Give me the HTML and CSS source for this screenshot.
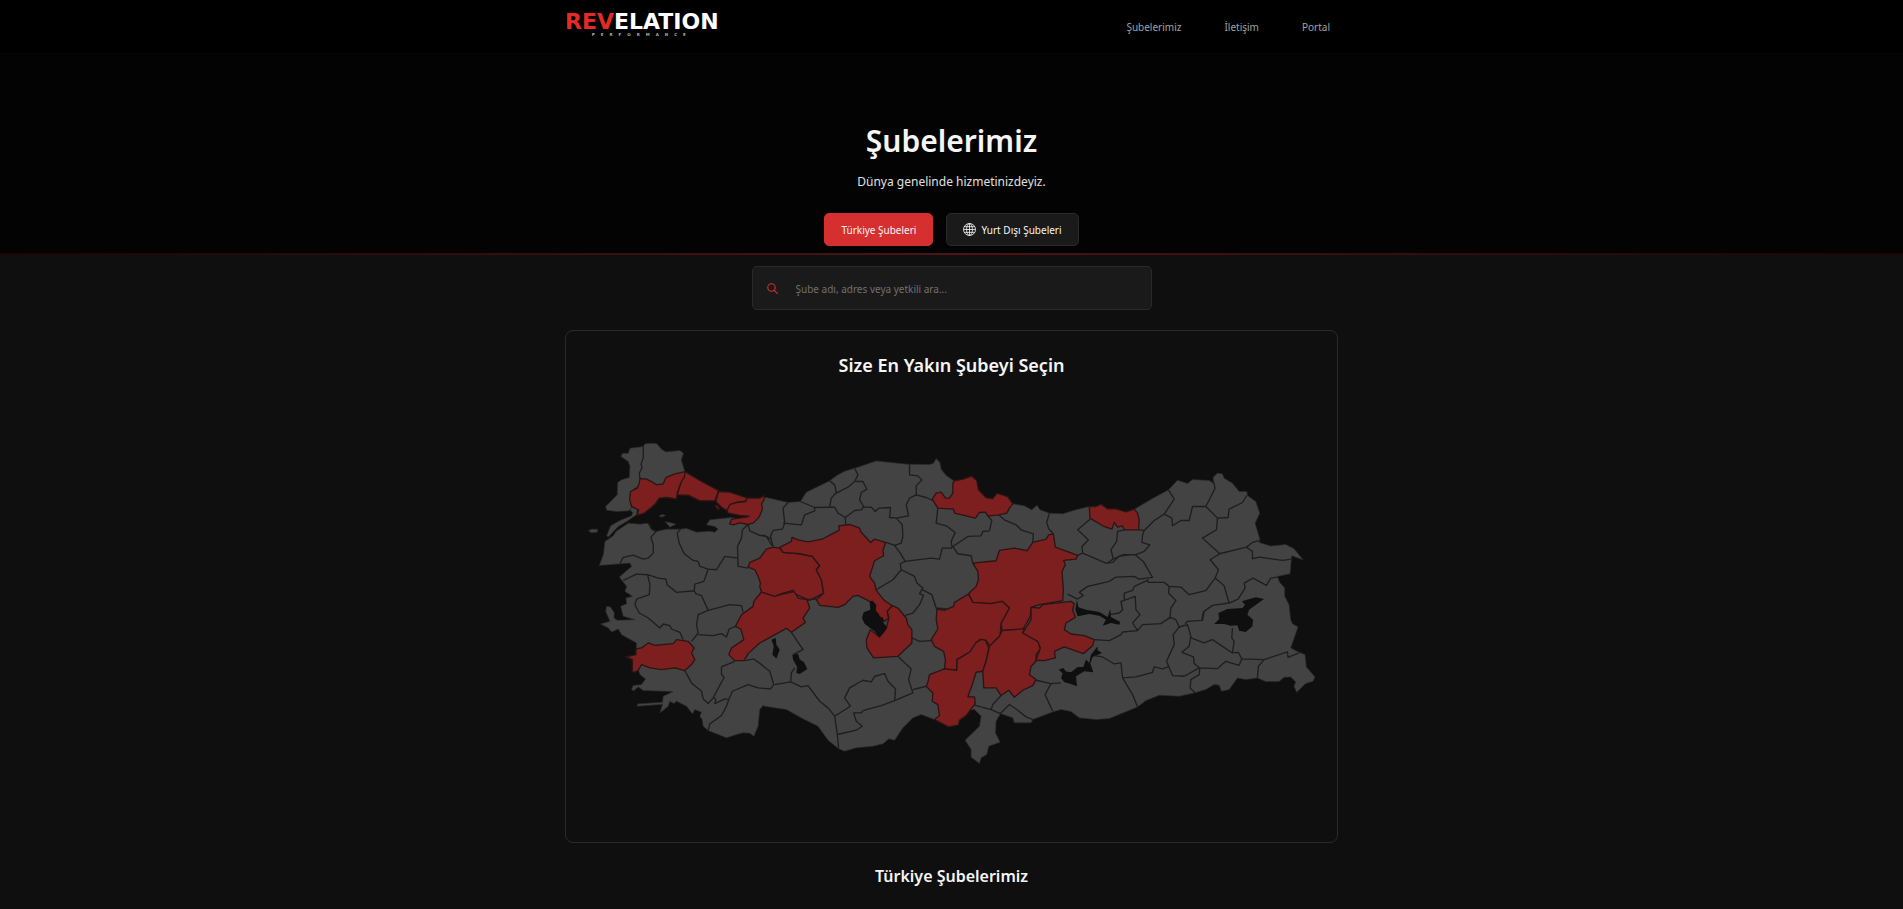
FILE: index.html
```html
<!DOCTYPE html>
<html lang="tr">
<head>
<meta charset="utf-8">
<meta name="viewport" content="width=device-width, initial-scale=1">
<title>Şubelerimiz</title>
<link rel="stylesheet" href="styles.css">
</head>
<body>
<header class="site-header">
  <div class="container header-row">
    <a class="logo" href="#"><span class="logo-name"><span class="logo-accent">REV</span>ELATION</span><span class="logo-sub">PERFORMANCE</span></a>
    <nav class="nav">
      <a href="#">Şubelerimiz</a>
      <a href="#">İletişim</a>
      <a href="#">Portal</a>
    </nav>
  </div>
</header>
<section class="hero">
  <h1>Şubelerimiz</h1>
  <p>Dünya genelinde hizmetinizdeyiz.</p>
  <div class="tabs">
    <button class="tab tab-active" type="button">Türkiye Şubeleri</button>
    <button class="tab" type="button">
      <svg class="globe" viewBox="0 0 16 16" aria-hidden="true"><g fill="none" stroke="currentColor"><circle cx="8" cy="8" r="7.4"/><ellipse cx="8" cy="8" rx="3.6" ry="7.4"/><path d="M8 .6v14.8M.6 8h14.8M1.6 4.5h12.8M1.6 11.5h12.8"/></g></svg>
      Yurt Dışı Şubeleri
    </button>
  </div>
</section>
<main class="container">
  <form class="search">
    <svg class="search-icon" viewBox="0 0 16 16" aria-hidden="true"><g fill="none" stroke="currentColor" stroke-width="1.6" stroke-linecap="round"><circle cx="6.5" cy="6.5" r="5.4"/><path d="M10.6 10.6L15 15"/></g></svg>
    <input type="search" aria-label="Şube ara" placeholder="Şube adı, adres veya yetkili ara...">
  </form>
  <section class="map-card">
    <h2>Size En Yakın Şubeyi Seçin</h2>
    <svg class="map" viewBox="6 -141 2220 1332" role="img" aria-label="Türkiye haritası">
      <g class="land">
        <path d="M128 70L145 70L150 55L190 50L195 42L210 40L230 41L245 58L258 66L300 62L311 70L304 90L315 125L285 150L230 170L180 165L152 185L150 210L155 232L148 243L110 245L80 241L77 230L95 212L112 195L113 158L125 150L148 143L150 110L145 95L123 80Z"/>
        <path d="M155 232L172 238L170 255L140 275L115 290L85 322L80 318L92 288L120 272L155 258L158 248L150 240Z"/>
        <path d="M25 303L35 298L53 298L52 307L35 309ZM237 258l12-4 8 3-12 5zM256 276l15 2 17 5-18 9z"/>
        <path d="M553 204L560 203L625 218L662 215L680 187L750 153L770 138L795 124L825 115L855 105L890 93L925 97L985 103L1050 104L1062 100L1070 86L1081 98L1085 118L1100 137L1123 153L1150 230L1300 222L1335 228L1357 240L1373 226L1382 240L1410 250L1450 252L1490 240L1530 230L1580 260L1665 238L1720 206L1768 180L1795 151L1825 161L1840 149L1890 152L1903 160L1902 142L1915 130L1930 132L1935 145L1960 160L1980 185L2003 185L2005 197L2030 215L2042 250L2028 280L2043 330L2040 338L2075 349L2120 344L2145 357L2172 390L2138 378L2133 432L2095 440L2102 458L2117 475L2117 500L2130 525L2135 570L2140 582L2157 592L2135 655L2160 668L2178 675L2182 712L2208 742L2202 755L2180 762L2153 788L2145 770L2150 757L2135 742L2115 743L2100 756L2060 756L2035 745L2000 750L1975 745L1950 780L1927 785L1920 767L1905 765L1880 780L1845 790L1800 800L1740 797L1700 813L1675 832L1590 867L1550 870L1500 865L1475 846L1445 840L1420 847L1360 870L1355 880L1305 880L1300 865L1263 852L1250 875L1248 910L1262 938L1228 950L1222 975L1205 985L1200 1002L1175 983L1175 960L1157 932L1200 890L1205 860L1185 840L1140 845L1065 870L1025 855L1000 865L970 895L945 932L928 928L910 943L880 950L830 955L795 965L777 958L745 932L715 890L670 868L620 840L555 830L550 828L540 840L535 890L522 920L510 911L490 910L470 915L440 925L385 903L370 890L367 870L360 860L365 848L345 840L338 853L320 830L290 815L282 822L270 815L265 830L240 850L248 824L172 830L172 823L248 818L250 800L280 786L190 783L175 772L160 784L155 778L160 768L185 765L197 748L180 735L165 690L168 675L170 640L125 615L115 598L95 607L85 595L62 583L90 575L77 545L80 530L92 532L103 550L102 565L112 572L165 570L130 560L122 530L140 522L138 505L158 500L135 485L140 470L118 442L155 410L150 400L58 407L70 375L75 335L100 318L108 305L145 280L180 283L205 280L215 298L230 305L260 298L300 298L320 296L350 307L390 304L405 307L415 298L405 290L380 285L390 270L455 263L500 270Z"/>
      </g>
      <g class="branch">
        <path d="M315 125L303 158L292 195L325 196L360 213L405 213L412 195L416 182L360 152Z"/>
        <path d="M180 146L200 148L215 155L230 165L250 162L258 143L285 132L315 125L314 140L303 158L292 190L290 208L262 203L238 205L228 220L215 232L195 249L172 257L176 240L155 230L149 210L152 185L172 175L178 160Z"/>
        <path d="M416 185L450 187L502 204L498 213L470 218L455 225L440 242L425 232L408 215ZM405 228l7-2 7 11-3 4z"/>
        <path d="M442 242L450 224L470 218L498 215L502 204L540 205L553 197L553 210L545 222L548 238L538 262L520 280L505 284L480 279L460 285L450 282L455 268L500 262L508 259L480 257L445 250Z"/>
        <path transform="translate(0 390)" d="M138 292L168 285L168 268L185 265L205 250L225 257L280 252L290 240L325 245L343 265L335 280L345 300L335 315L315 333L285 325L245 330L210 325L185 315L175 332L163 339L157 335L157 300Z"/>
        <path transform="translate(0 390)" d="M545 97L522 125L520 140L485 165L467 200L483 208L492 240L455 265L447 285L465 303L493 303L505 282L540 250L620 206L635 218L677 188L670 175L690 145L682 120L655 115L645 95L590 108Z"/>
        <path transform="translate(540 0)" d="M20 358L0 385L-30 398L-35 412L-15 420L-5 440L2 460L0 470L5 487L45 500L65 492L100 482L110 495L150 512L192 490L185 450L170 420L180 408L158 380L120 372L70 368L60 355L40 352Z"/>
        <path transform="translate(540 0)" d="M60 353L95 335L97 323L115 330L145 336L190 327L240 300L237 288L270 284L300 295L303 305L333 338L345 328L378 338L370 362L372 378L345 393L330 440L345 460L350 482L372 510L398 528L383 545L387 565L375 575L360 560L345 540L348 525L330 515L295 497L280 500L255 525L235 533L180 527L170 510L192 490L185 450L170 420L180 408L158 380L120 372L70 368Z"/>
        <path transform="translate(540 450)" d="M398 78L415 85L440 115L445 135L457 150L457 190L415 230L342 235L322 205L320 180L332 150L360 172L380 145L388 115L383 95Z"/>
        <path transform="translate(1050 0)" d="M130 400L200 393L210 362L255 355L293 363L310 338L350 328L358 315L372 312L378 352L445 377L440 388L403 392L408 405L398 425L402 480L400 513L330 525L305 533L303 560L280 600L218 602L215 580L240 535L218 515L185 522L130 518L117 492L140 470L147 450L145 425Z"/>
        <path transform="translate(1050 450)" d="M117 43L75 68L72 80L45 92L22 88L20 120L25 148L5 180L15 200L42 215L48 240L45 268L82 272L83 240L125 215L150 180L170 182L182 200L212 170L215 130L240 85L218 65L185 72L130 68Z"/>
        <path transform="translate(1050 450)" d="M45 268L82 272L83 240L120 218L140 188L155 179L168 182L178 205L170 245L160 275L140 278L130 310L115 352L135 352L137 372L110 408L90 422L87 437L57 442L15 420L30 408L25 375L8 365L10 340L-10 320L-5 308L0 285Z"/>
        <path transform="translate(1050 450)" d="M218 153L285 147L280 160L325 182L333 208L320 225L320 245L305 260L300 285L320 300L310 318L280 332L255 353L238 332L215 348L200 325L163 325L160 275L170 245L180 200L210 170Z"/>
        <path transform="translate(1050 450)" d="M280 160L305 120L305 83L330 85L340 75L425 65L435 72L430 90L438 113L410 130L405 150L425 163L465 168L495 180L490 198L462 222L405 202L375 215L378 235L345 243L320 242L333 205L325 185Z"/>
        <path transform="translate(1050 0)" d="M8 208L20 190L35 187L48 205L60 205L70 190L70 160L75 153L100 148L127 139L142 152L147 180L170 204L190 206L203 190L235 200L250 222L240 235L232 250L205 256L175 258L168 247L150 248L138 265L75 250L72 238L25 235Z"/>
        <path transform="translate(1050 0)" d="M480 230L500 230L515 223L535 237L560 237L590 246L615 238L625 250L630 270L628 300L585 300L580 288L565 292L555 278L548 298L520 288L482 265Z"/>
      </g>
      <g class="water">
        <path transform="translate(540 450)" d="M330 65L340 63L350 78L348 95L355 100L362 115L370 112L372 130L383 143L372 160L358 173L345 155L335 148L315 132L307 115L312 98L332 90ZM98 225L115 222L120 240L133 248L143 268L120 283L110 280L112 262L100 240ZM35 180L48 175L50 195L60 210L50 237L38 225L42 200Z"/>
        <path transform="translate(1590 420)" d="M315 163L330 148L328 130L355 118L400 115L408 105L398 95L440 83L465 88L445 102L420 120L415 135L432 150L430 170L410 187L390 183L385 167L365 168L345 163Z"/>
        <path transform="translate(1050 450)" d="M388 270L402 265L410 276L425 278L445 262L462 262L470 240L480 250L485 225L505 200L505 212L518 220L490 232L483 252L492 278L465 275L440 290L443 320L420 312L405 308L395 295L400 282ZM438 90L443 60L447 83L470 90L510 97L535 112L543 88L545 112L573 127L570 135L545 130L520 138L530 120L510 108L480 103L445 110Z"/>
      </g>
      <g class="borders">
        <path d="M190 50L190 85L183 103L187 112L178 130L180 146M205 280L215 298L228 306L213 322L220 345L220 370L205 385L190 388L160 376L130 383L120 400M302 298L292 310L298 340L313 372L340 392L355 395L360 410L385 418L410 420L435 380L475 385M505 284L488 300L485 325L473 350L475 410L505 415M505 284L510 303L540 317L560 320L577 348M385 418L372 455L345 463L343 483"/>
        <path transform="translate(0 390)" d="M345 93L290 98L262 75L258 58L235 55L203 45L170 43L130 62M203 45L210 75L208 105L170 118L165 135L178 160L205 175L240 205L250 193L270 198L275 208L300 218L310 240M343 93L348 102L365 108L385 152L355 165L350 195L355 220L335 245M385 152L450 135L485 138L490 158M355 225L400 228L425 222L440 232L448 208L467 200M315 333L335 370L365 395L370 418L385 432L400 415L433 353L425 345L425 322L465 305M400 412L408 420L405 432L435 418L447 420L458 395L505 375L535 385L572 388L582 375L570 335L545 315L522 298L497 303M447 420L440 440L425 468L390 493L385 513"/>
        <path transform="translate(540 0)" d="M85 218L70 235L75 280L68 298L40 302L32 320L40 350M0 317L15 317L33 328M70 280L125 285L135 255L165 243L165 233L122 215M165 233L225 232L235 250L257 263L258 283M210 153L225 165L230 188L215 205L210 230M285 115L295 135L285 155L265 172L230 190M288 155L310 155L322 178L305 188L300 210L312 230L305 240L285 242L257 263M312 232L335 232L347 245L357 235L393 233L390 263L410 265M450 103L450 135L475 138L487 150L470 168L470 195M520 212L500 203L470 195L450 205L440 225L447 258L410 265L428 285L430 320L425 340L405 347L380 338M405 347L422 370L437 395L515 385L540 388L548 355L578 355M437 395L422 402L425 420L400 450L350 480M425 420L465 440L472 460L490 475L480 492L492 497L480 525L460 550L437 557M485 478L517 495L530 535L562 538M535 232L530 280L560 288L587 308L575 335L578 355"/>
        <path transform="translate(540 450)" d="M457 175L480 185L515 183M415 230L455 268L447 300L460 340L405 363L365 378L310 393L305 400L282 400L290 425L308 440L290 452L233 465L237 508M460 330L500 320M405 363L408 328L385 305L375 282L345 290L335 307L310 302L270 325L255 355L272 380L225 410L233 465M225 410L205 385L180 365L145 318L125 322L93 307L45 315M95 158L130 210L100 225M105 265L95 280L93 307M142 60L170 58"/>
        <path transform="translate(1050 0)" d="M360 250L352 278L358 297L372 312M210 257L225 270L260 285L275 300L312 312L310 338M175 258L187 272L180 303L160 305L155 318L115 320L70 350L85 372L125 378L130 400M482 268L445 300L477 330L458 350L460 370L530 400L550 398L568 380L600 375M460 370L445 377M540 455L475 470L450 488L462 497L445 508L415 493"/>
        <path transform="translate(1590 90)" d="M45 210L25 215L22 245L5 270L12 297L-5 310M88 210L105 212L100 225L98 248L122 255L105 275L78 285L40 285L12 298M78 285L102 305L130 353L90 358L75 350L20 352L0 365M178 90L195 118L165 163L135 182L105 212M165 163L188 175L190 198L215 182L240 182L250 140L290 140L325 175L357 173L360 148L400 128L413 107M313 65L318 85L290 140M325 175L322 210L280 235L332 282L412 262L430 248L453 242M332 282L303 300L328 330L318 355L290 393L240 405L215 382L180 380L165 368L117 368L115 358M412 262L430 275L430 297L450 292L520 302L548 298M318 355L345 378L360 430M505 352L485 355L472 377L432 355L405 370L408 385L387 418L360 430L310 437L285 455L280 483M180 380L178 400L200 422L185 445L182 478M115 362L75 380L70 392L45 400L45 422"/>
        <path transform="translate(1590 420)" d="M45 92L35 95L40 120L30 130L0 135M45 92L78 80L80 120L92 135L70 160L85 183L100 165L155 162L183 143L200 150L210 172M85 183L40 187L35 195L0 213L-45 210M210 172L192 195L195 225L172 275L190 318L225 320L270 295M210 172L235 165L245 200L240 230L218 248L253 262L255 282L272 295L325 297L350 275L390 287L398 268L388 248L370 250L375 215L368 205L370 175M228 162L235 155L278 152L283 125M245 205L285 220L310 210L370 250M398 268L465 270L535 247L537 263L570 250M465 270L448 290L445 325M272 295L270 315L245 330L243 355L258 370M180 290L160 298L135 292L130 308L80 322L40 325L35 280L15 283L-20 262L-45 258M40 325L70 375L85 412"/>
        <path transform="translate(1050 450)" d="M320 302L365 312L395 310M365 312L347 345L370 395M215 348L190 375L185 390L135 377M185 390L213 402L240 375L262 390L290 412L312 420"/>
      </g>
    </svg>
  </section>
  <h2 class="list-title">Türkiye Şubelerimiz</h2>
</main>
</body>
</html>
```

FILE: styles.css
```css
* { box-sizing: border-box; }
body {
  margin: 0;
  min-height: 100vh;
  background: #0f0f0f;
  color: #f5f5f5;
  font-family: "Noto Sans", "Open Sans", sans-serif;
  font-size: 11px;
}
.container { width: 100%; max-width: 773px; margin: 0 auto; }
.site-header { background: #000; border-bottom: 1px solid #050505; }
.header-row { display: flex; justify-content: space-between; align-items: center; height: 53px; }
.logo { display: flex; flex-direction: column; align-items: center; padding-bottom: 4px; color: #fff; text-decoration: none; font-family: "DejaVu Sans", sans-serif; font-weight: 700; }
.logo-name { font-size: 22px; line-height: 20px; }
.logo-accent { color: #e42a24; }
.logo-sub { font-size: 4px; line-height: 5px; letter-spacing: 6px; color: #a9b3a9; }
.nav { display: flex; gap: 27px; }
.nav a { padding: 8px; color: #a0a0a0; text-decoration: none; font-size: 10px; }
.hero {
  display: flex; flex-direction: column; align-items: center;
  padding: 65px 16px 7px;
  background: #030303;
  border-bottom: 2px solid;
  border-image: linear-gradient(90deg, #180606, #4d1414 50%, #180606) 1;
}
h1, h2, p { margin: 0; }
h1 { font-size: 30px; line-height: 44px; font-weight: 600; }
.hero p { margin-top: 9px; font-size: 12px; line-height: 20px; color: #e0e0e0; }
.tabs { display: flex; gap: 13px; margin-top: 21px; }
.tab {
  display: flex; align-items: center; gap: 5px;
  height: 33px; padding: 0 16px;
  border: 1px solid #2a2a2a; border-radius: 5px;
  background: #1a1a1a; color: #f5f5f5;
  font: inherit; font-size: 10px;
}
.tab-active { background: #d62f2f; border-color: #d62f2f; }
.globe { width: 13px; height: 13px; }
.search {
  display: flex; align-items: center; gap: 18px;
  width: 100%; max-width: 400px; height: 44px; margin: 11px auto 20px; padding: 0 14px;
  border: 1px solid #2a2a2a; border-radius: 5px; background: #1a1a1a;
}
.search-icon { width: 11px; height: 11px; color: #d62f2f; }
.search input { flex: 1; min-width: 0; padding: 2px 0 0; border: 0; outline: 0; background: transparent; color: #f5f5f5; font: inherit; font-size: 10px; }
.search input::placeholder { color: #707070; opacity: 1; }
.map-card { padding: 16px; border: 1px solid #2a2a2a; border-radius: 8px; text-align: center; }
.map-card h2 { font-size: 18px; line-height: 36px; font-weight: 600; }
.map { display: block; width: 100%; height: auto; }
.land { fill: #434343; stroke: #2a2a2a; stroke-width: 2; stroke-linejoin: round; }
.branch { fill: #7d1f1f; stroke: #2c1414; stroke-width: 4; stroke-linejoin: round; }
.water { fill: #0f0f0f; }
.borders { fill: none; stroke: #1e1e1e; stroke-width: 4; stroke-linejoin: round; }
.list-title { margin: 21px 0 20px; font-size: 16px; line-height: 24px; font-weight: 600; text-align: center; }
```
